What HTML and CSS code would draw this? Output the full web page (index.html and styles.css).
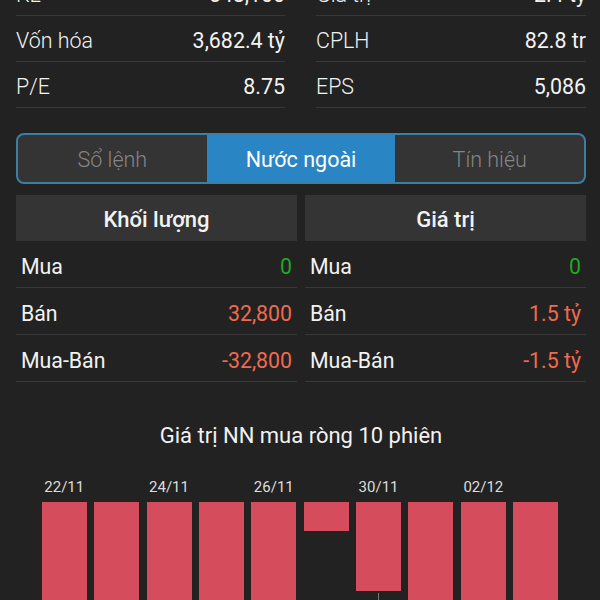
FILE: index.html
```html
<!DOCTYPE html>
<html>
<head>
<meta charset="utf-8">
<title>Nước ngoài</title>
<link rel="stylesheet" href="styles.css">
</head>
<body>
	<div id="page">
		<!-- chỉ số cơ bản -->
		<div class="stats">
			<div class="stat"><span class="label">KL</span><span class="value">548,100</span></div>
			<div class="stat"><span class="label">Giá trị</span><span class="value">2.4 tỷ</span></div>
			<div class="stat"><span class="label">Vốn hóa</span><span class="value">3,682.4 tỷ</span></div>
			<div class="stat"><span class="label">CPLH</span><span class="value">82.8 tr</span></div>
			<div class="stat"><span class="label">P/E</span><span class="value">8.75</span></div>
			<div class="stat"><span class="label">EPS</span><span class="value">5,086</span></div>
		</div>

		<div class="tabs">
			<div class="tab">Sổ lệnh</div>
			<div class="tab active">Nước ngoài</div>
			<div class="tab">Tín hiệu</div>
		</div>

		<!-- giao dịch nhà đầu tư nước ngoài -->
		<div class="foreign">
			<div class="col">
				<div class="col-head">Khối lượng</div>
				<div class="row"><span>Mua</span><span class="up">0</span></div>
				<div class="row"><span>Bán</span><span class="down">32,800</span></div>
				<div class="row"><span>Mua-Bán</span><span class="down">-32,800</span></div>
			</div>
			<div class="col">
				<div class="col-head">Giá trị</div>
				<div class="row"><span>Mua</span><span class="up">0</span></div>
				<div class="row"><span>Bán</span><span class="down">1.5 tỷ</span></div>
				<div class="row"><span>Mua-Bán</span><span class="down">-1.5 tỷ</span></div>
			</div>
		</div>

		<div class="chart">
			<div class="chart-title">Giá trị NN mua ròng 10 phiên</div>
			<div class="bars">
				<div class="bar-col"><div class="bar-label">22/11</div><div class="bar" style="height: 140px"></div></div>
				<div class="bar-col"><div class="bar-label"></div><div class="bar" style="height: 140px"></div></div>
				<div class="bar-col"><div class="bar-label">24/11</div><div class="bar" style="height: 140px"></div></div>
				<div class="bar-col"><div class="bar-label"></div><div class="bar" style="height: 140px"></div></div>
				<div class="bar-col"><div class="bar-label">26/11</div><div class="bar" style="height: 140px"></div></div>
				<div class="bar-col"><div class="bar-label"></div><div class="bar" style="height: 29px"></div></div>
				<div class="bar-col"><div class="bar-label">30/11</div><div class="bar" style="height: 89px"></div><div class="tick"></div></div>
				<div class="bar-col"><div class="bar-label"></div><div class="bar" style="height: 140px"></div></div>
				<div class="bar-col"><div class="bar-label">02/12</div><div class="bar" style="height: 140px"></div></div>
				<div class="bar-col"><div class="bar-label"></div><div class="bar" style="height: 140px"></div></div>
			</div>
		</div>
	</div>
</body>
</html>
```

FILE: styles.css
```css
html, body {
	margin: 0;
	height: 100%;
	overflow: hidden;
	background: #222222;
}

body {
	font-family: Roboto, "Noto Sans", sans-serif;
	color: #f2f2f2;
}

/* trang đã cuộn xuống một chút */
#page {
	margin-top: -30px;
	padding: 0 14px 0 16px;
}

/* chỉ số cơ bản */
.stats {
	display: grid;
	grid-template-columns: 269px 270px;
	column-gap: 31px;
}

.stat {
	display: flex;
	justify-content: space-between;
	align-items: center;
	height: 41px;
	padding-top: 4px;
	border-bottom: 1px solid #383838;
	font-size: 21.4px;
}

.stat .label {
	font-weight: 300;
}

.stat .value {
	font-weight: 400;
}

/* tab */
.tabs {
	display: flex;
	margin-top: 25px;
	height: 47px;
	border: 2px solid #3c7ea6;
	border-radius: 8px;
	overflow: hidden;
	background: #343434;
}

.tab {
	flex: 1;
	display: flex;
	align-items: center;
	justify-content: center;
	padding-top: 2px;
	font-size: 21.5px;
	font-weight: 300;
	color: #858585;
}

.tab.active {
	background: #2a85c4;
	color: #ffffff;
	font-weight: 400;
}

/* khối nước ngoài */
.foreign {
	display: grid;
	grid-template-columns: 1fr 1fr;
	column-gap: 8px;
	margin-top: 11px;
}

.col-head {
	display: flex;
	align-items: center;
	justify-content: center;
	height: 44px;
	padding-top: 2px;
	background: #343434;
	font-size: 22px;
	font-weight: 500;
}

.row {
	display: flex;
	justify-content: space-between;
	align-items: center;
	height: 42px;
	padding: 4px 5px 0;
	border-bottom: 1px solid #383838;
	font-size: 21.3px;
}

.up {
	color: #22a722;
}

.down {
	color: #f06a4e;
}

/* biểu đồ */
.chart-title {
	margin-top: 42px;
	text-align: center;
	font-size: 22px;
	line-height: 24px;
	font-weight: 400;
}

.bars {
	display: flex;
	justify-content: center;
	gap: 7.4px;
	margin-top: 30px;
	margin-left: -2px;
}

.bar-col {
	display: flex;
	flex-direction: column;
	align-items: center;
	width: 45px;
}

.bar-label {
	height: 18px;
	line-height: 18px;
	margin-bottom: 6px;
	font-size: 15px;
	color: #dddddd;
	white-space: nowrap;
}

.bar {
	width: 100%;
	background: #d54c5c;
}

.tick {
	width: 1px;
	height: 10px;
	margin-top: 2px;
	background: #777777;
}
```
